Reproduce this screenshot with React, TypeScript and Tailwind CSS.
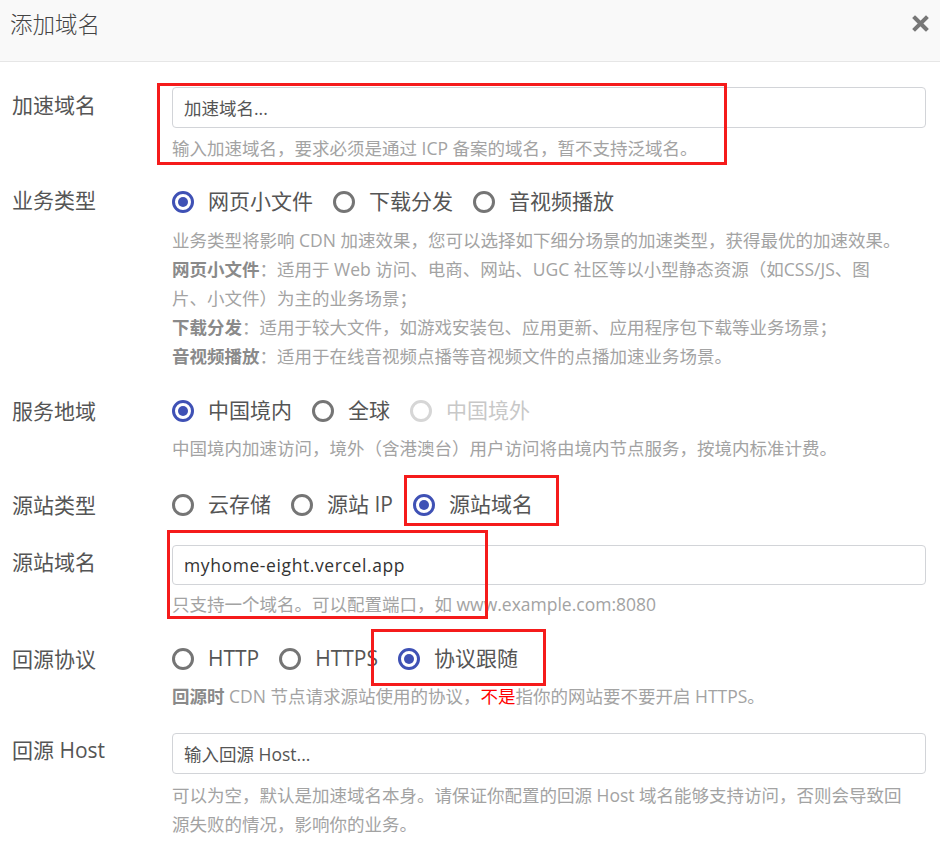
import type { ReactNode } from 'react'

const FONT = "'Open Sans', 'Noto Sans CJK SC', sans-serif"

function Radio({ label, checked, disabled }: { label: string; checked?: boolean; disabled?: boolean }) {
  return (
    <label className="flex items-center h-[30px] mr-[20px]">
      <span
        className={`w-[22px] h-[22px] rounded-full border-[3px] flex items-center justify-center mr-[14px] ${
          checked ? 'border-[#3f51b5]' : disabled ? 'border-[#d6d6d6]' : 'border-[#757575]'
        }`}
      >
        {checked && <span className="w-[10px] h-[10px] rounded-full bg-[#3f51b5]" />}
      </span>
      <span className={`text-[21px] ${disabled ? 'text-[#c8c8c8]' : 'text-[#555]'}`}>{label}</span>
    </label>
  )
}

function Row({ label, className, labelClass, children }: { label: string; className: string; labelClass: string; children: ReactNode }) {
  return (
    <div className={`flex items-start ${className}`}>
      <div className={`w-[172px] pl-3 text-[21px] leading-[30px] text-[#555] shrink-0 ${labelClass}`}>{label}</div>
      <div className="flex-1 pr-[14px]">{children}</div>
    </div>
  )
}

function Help({ children, className = '' }: { children: ReactNode; className?: string }) {
  return <div className={`text-[17.5px] leading-[29px] text-[#a3a3a3] ${className}`}>{children}</div>
}

export default function App() {
  return (
    <div className="relative w-[940px] h-[846px] bg-white overflow-hidden" style={{ fontFamily: FONT }}>
      {/* Header */}
      <div className="h-[62px] bg-[#f9f9f9] border-b border-[#e6e6e6] flex items-start justify-between pl-[10px] pr-[11px]">
        <h1 className="text-[22.5px] leading-[30px] mt-[10px] text-[#444] font-light">添加域名</h1>
        <button className="mt-[15px]">
          <svg width="17" height="17" viewBox="0 0 17 17">
            <path d="M3 3L14 14M14 3L3 14" stroke="#777" strokeWidth="4" strokeLinecap="square" />
          </svg>
        </button>
      </div>

      <div className="pt-[25px]">
        <Row label="加速域名" className="" labelClass="mt-[3px]">
          <input
            placeholder="加速域名..."
            className="w-full h-[41px] border border-[#d2d4d8] rounded-[4px] px-[11px] text-[17.5px] text-[#333] placeholder:text-[#555] outline-none"
          />
          <Help className="mt-[6px]">输入加速域名，要求必须是通过 ICP 备案的域名，暂不支持泛域名。</Help>
        </Row>

        <Row label="业务类型" className="mt-[24px]" labelClass="-mt-[2px]">
          <div className="flex">
            <Radio label="网页小文件" checked />
            <Radio label="下载分发" />
            <Radio label="音视频播放" />
          </div>
          <Help className="mt-[9px]">
            <div>业务类型将影响 CDN 加速效果，您可以选择如下细分场景的加速类型，获得最优的加速效果。</div>
            <div>
              <b className="text-[#8a8a8a]">网页小文件</b>：适用于 Web 访问、电商、网站、UGC 社区等以小型静态资源（如CSS/JS、图
            </div>
            <div>片、小文件）为主的业务场景；</div>
            <div>
              <b className="text-[#8a8a8a]">下载分发</b>：适用于较大文件，如游戏安装包、应用更新、应用程序包下载等业务场景；
            </div>
            <div>
              <b className="text-[#8a8a8a]">音视频播放</b>：适用于在线音视频点播等音视频文件的点播加速业务场景。
            </div>
          </Help>
        </Row>

        <Row label="服务地域" className="mt-[25px]" labelClass="">
          <div className="flex">
            <Radio label="中国境内" checked />
            <Radio label="全球" />
            <Radio label="中国境外" disabled />
          </div>
          <Help className="mt-[8px]">中国境内加速访问，境外（含港澳台）用户访问将由境内节点服务，按境内标准计费。</Help>
        </Row>

        <Row label="源站类型" className="mt-[27px]" labelClass="">
          <div className="flex">
            <Radio label="云存储" />
            <Radio label="源站 IP" />
            <Radio label="源站域名" checked />
          </div>
        </Row>

        <Row label="源站域名" className="mt-[25px]" labelClass="mt-[2px]">
          <input
            readOnly
            value="myhome-eight.vercel.app"
            className="w-full h-[40px] border border-[#d2d4d8] rounded-[4px] px-[11px] text-[17.5px] tracking-[0.6px] text-[#333] outline-none"
          />
          <Help className="mt-[5px]">只支持一个域名。可以配置端口，如 www.example.com:8080</Help>
        </Row>

        <Row label="回源协议" className="mt-[25px]" labelClass="">
          <div className="flex">
            <Radio label="HTTP" />
            <Radio label="HTTPS" />
            <Radio label="协议跟随" checked />
          </div>
          <Help className="mt-[8px]">
            <b className="text-[#8a8a8a]">回源时</b> CDN 节点请求源站使用的协议，<span className="text-[#f00]">不是</span>指你的网站要不要开启 HTTPS。
          </Help>
        </Row>

        <Row label="回源 Host" className="mt-[22px]" labelClass="mt-[2px]">
          <input
            placeholder="输入回源 Host..."
            className="w-full h-[41px] border border-[#d2d4d8] rounded-[4px] px-[11px] text-[17.5px] text-[#333] placeholder:text-[#555] outline-none"
          />
          <Help className="mt-[7px]">
            <div>可以为空，默认是加速域名本身。请保证你配置的回源 Host 域名能够支持访问，否则会导致回</div>
            <div>源失败的情况，影响你的业务。</div>
          </Help>
        </Row>
      </div>

      {/* red annotation boxes */}
      <div className="absolute left-[157px] top-[83px] w-[570px] h-[82px] border-[3px] border-[#f51b1b] pointer-events-none" />
      <div className="absolute left-[404px] top-[475px] w-[155px] h-[51px] border-[3px] border-[#f51b1b] pointer-events-none" />
      <div className="absolute left-[167px] top-[530px] w-[321px] h-[89px] border-[3px] border-[#f51b1b] pointer-events-none" />
      <div className="absolute left-[371px] top-[629px] w-[175px] h-[57px] border-[3px] border-[#f51b1b] pointer-events-none" />
    </div>
  )
}
